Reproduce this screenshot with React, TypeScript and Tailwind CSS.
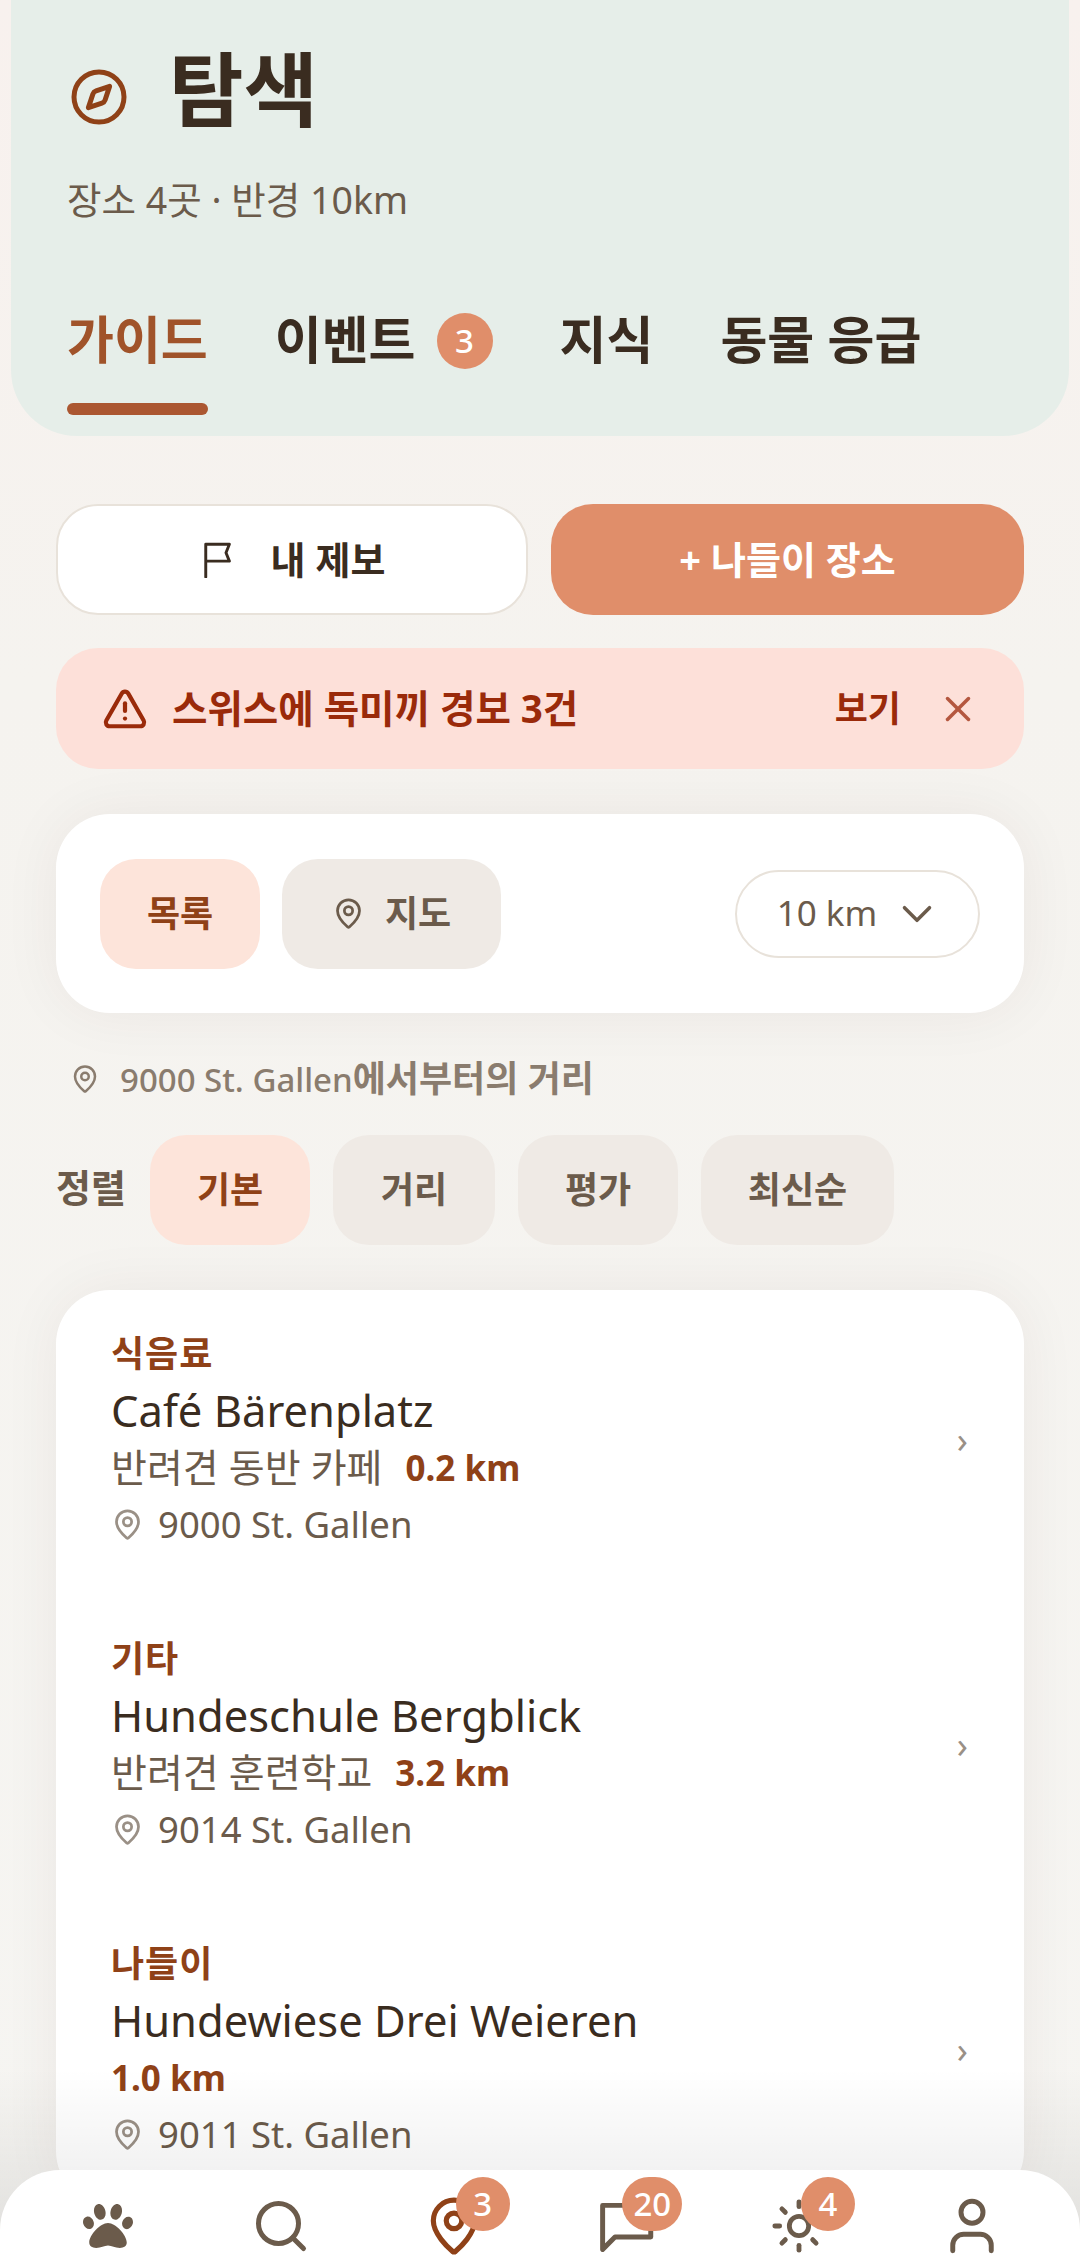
import { ChevronDown, Compass, MapPin, Search, Sun, TriangleAlert, User, X } from 'lucide-react';
import { FaPaw } from 'react-icons/fa';

const places = [
  { category: '식음료', name: 'Café Bärenplatz', desc: '반려견 동반 카페', km: '0.2 km', addr: '9000 St. Gallen' },
  { category: '기타', name: 'Hundeschule Bergblick', desc: '반려견 훈련학교', km: '3.2 km', addr: '9014 St. Gallen' },
  { category: '나들이', name: 'Hundewiese Drei Weieren', desc: '', km: '1.0 km', addr: '9011 St. Gallen' },
];

function Badge({ value, wide }: { value: string; wide?: boolean }) {
  return (
    <span
      className={`absolute top-[-16px] flex h-[54px] items-center justify-center rounded-full bg-[#e08e6a] text-[33px] font-medium text-white ${
        wide ? 'left-[29px] w-[60px]' : 'left-[35px] w-[54px]'
      }`}
    >
      {value}
    </span>
  );
}

function NavItem({ children, badge, wide }: { children: React.ReactNode; badge?: string; wide?: boolean }) {
  return (
    <div className="flex flex-1 justify-center">
      <div className="relative flex h-[66px] w-[66px] items-center justify-center">
        {children}
        {badge && <Badge value={badge} wide={wide} />}
      </div>
    </div>
  );
}

function PlaceRow({ place }: { place: (typeof places)[number] }) {
  return (
    <div className="flex h-[305px] items-start pl-[55px] pr-[56px] pt-[44px]">
      <div className="flex-1">
        <div className="text-[36px] leading-[40px] font-bold tracking-[1px] text-[#8f4117]">{place.category}</div>
        <div className="mt-[9px] text-[43.5px] leading-[54px] text-[#3a2c20]">{place.name}</div>
        <div className="mt-[3px] flex h-[54px] items-center">
          {place.desc && <span className="mr-[23px] text-[39px] text-[#6b5b4b]">{place.desc}</span>}
          <span className="mt-[3px] text-[35px] font-bold text-[#8f4117]">{place.km}</span>
        </div>
        <div className="mt-[6px] flex h-[48px] items-center gap-[14px] text-[36.5px] text-[#6b5b4b]">
          <MapPin className="h-[33px] w-[33px] text-[#9a9086]" strokeWidth={2} />
          {place.addr}
        </div>
      </div>
      <div className="mt-[79px] text-[36px] text-[#9a9086]">›</div>
    </div>
  );
}

export default function App() {
  return (
    <div
      className="relative h-[2268px] overflow-hidden bg-gradient-to-b from-[#f8f1ee] via-[#f5f3ef] via-30% to-[#f6f5f2] text-[#3a2c20]"
      style={{ fontFamily: '"Noto Sans", "Noto Sans CJK KR", sans-serif' }}
    >
      <header className="mx-[11px] h-[436px] rounded-b-[66px] bg-[#e6eee9] pl-[56px] pr-[40px] pt-[39px]">
        <div className="flex items-center gap-[40px]">
          <Compass className="ml-[2px] mt-[16px] h-[60px] w-[60px] text-[#8f4117]" strokeWidth={2} />
          <h1 className="text-[81px] leading-[100px] font-bold">탐색</h1>
        </div>
        <p className="mt-[36px] text-[37.5px] leading-[50px] text-[#6b5b4b]">장소 4곳 · 반경 10km</p>
        <nav className="mt-[79px] flex items-start gap-[67px]">
          <div className="relative text-[51px] leading-[70px] font-bold text-[#a0532a]">
            가이드
            <div className="absolute inset-x-0 top-[99px] h-[12px] rounded-full bg-[#ab5731]" />
          </div>
          <div className="flex items-center gap-[21px] text-[51px] leading-[70px] font-bold">
            이벤트
            <span className="mt-[4px] flex h-[56px] w-[56px] items-center justify-center rounded-full bg-[#e08e6a] text-[33px] font-medium text-white">
              3
            </span>
          </div>
          <div className="text-[51px] leading-[70px] font-bold">지식</div>
          <div className="text-[51px] leading-[70px] font-bold">동물 응급</div>
        </nav>
      </header>

      <main className="px-[56px] pt-[68px]">
        <div className="flex gap-[23px]">
          <button className="flex h-[111px] w-[472px] items-center justify-center gap-[36px] rounded-[42px] border-2 border-[#e8e2da] bg-white text-[38px] font-bold">
            <svg viewBox="0 0 32 32" className="h-[36px] w-[36px]" fill="none" stroke="currentColor" strokeWidth="2.6" strokeLinecap="round" strokeLinejoin="round">
              <path d="M6 31V2h21l-3 7.5 3 7.5H6" />
            </svg>
            내 제보
          </button>
          <button className="h-[111px] flex-1 rounded-[42px] bg-[#e08e6a] text-[38px] font-bold text-white">
            + 나들이 장소
          </button>
        </div>

        <div className="mt-[33px] flex h-[121px] items-center rounded-[42px] bg-[#fde0d9] pl-[46px] pr-[45px] text-[#9a2a0a]">
          <TriangleAlert className="h-[46px] w-[46px]" strokeWidth={2.2} />
          <span className="ml-[24px] flex-1 text-[38.5px] font-bold">스위스에 독미끼 경보 3건</span>
          <span className="text-[36px] font-bold">보기</span>
          <X className="ml-[36px] h-[42px] w-[42px] text-[#b4573f]" strokeWidth={2} />
        </div>

        <section className="mt-[45px] flex h-[199px] items-center rounded-[54px] bg-white pl-[44px] pr-[44px] shadow-[0_0_60px_rgba(60,40,20,0.06)]">
          <div className="flex h-[110px] w-[160px] items-center justify-center rounded-[36px] bg-[#fde4da] text-[36px] font-bold text-[#8f4117]">
            목록
          </div>
          <div className="ml-[22px] flex h-[110px] w-[219px] items-center justify-center gap-[20px] rounded-[36px] bg-[#efeae5] text-[36px] font-bold text-[#6b5b4b]">
            <MapPin className="h-[33px] w-[33px]" strokeWidth={2} />
            지도
          </div>
          <div className="ml-auto flex h-[88px] w-[245px] items-center justify-center gap-[15px] rounded-full border-2 border-[#e8e2da] pl-[4px] text-[35px] text-[#6b5b4b]">
            10 km
            <ChevronDown className="h-[50px] w-[50px]" strokeWidth={1.7} />
          </div>
        </section>

        <div className="mt-[42px] flex h-[48px] items-center gap-[20px] pl-[14px] text-[36px] font-semibold text-[#8a7c6e]">
          <MapPin className="h-[30px] w-[30px]" strokeWidth={2} />
          <span>
            <span className="text-[33px] font-medium">9000 St. Gallen</span>에서부터의 거리
          </span>
        </div>

        <div className="mt-[32px] flex items-center text-[36px] font-bold text-[#6b5b4b]">
          <span className="mb-[6px] w-[94px] text-[38px]">정렬</span>
          <div className="flex h-[110px] w-[160px] items-center justify-center rounded-[36px] bg-[#fde4da] text-[#8f4117]">기본</div>
          <div className="ml-[23px] flex h-[110px] w-[162px] items-center justify-center rounded-[36px] bg-[#efeae5]">거리</div>
          <div className="ml-[23px] flex h-[110px] w-[160px] items-center justify-center rounded-[36px] bg-[#efeae5]">평가</div>
          <div className="ml-[23px] flex h-[110px] w-[193px] items-center justify-center rounded-[36px] bg-[#efeae5]">최신순</div>
        </div>

        <section className="mt-[45px] rounded-[54px] bg-white shadow-[0_0_60px_rgba(60,40,20,0.06)]">
          {places.map(p => (
            <PlaceRow key={p.name} place={p} />
          ))}
        </section>
      </main>

      <div className="absolute inset-x-0 bottom-0 h-[200px] bg-gradient-to-b from-black/0 to-black/10" />
      <nav className="absolute inset-x-0 bottom-0 flex h-[98px] rounded-t-[60px] bg-white px-[22px] pt-[23px] text-[#6b5b4b]">
        <NavItem>
          <FaPaw className="h-[50px] w-[50px]" />
        </NavItem>
        <NavItem>
          <Search className="h-[60px] w-[60px]" strokeWidth={2} />
        </NavItem>
        <NavItem badge="3">
          <MapPin className="h-[62px] w-[62px] text-[#8f4117]" strokeWidth={2} />
        </NavItem>
        <NavItem badge="20" wide>
          <svg viewBox="0 0 24 24" className="h-[66px] w-[66px]" fill="none" stroke="currentColor" strokeWidth="1.8" strokeLinecap="round" strokeLinejoin="round">
            <path d="M3.5 20.5V4.5H21V16H8Z" />
          </svg>
        </NavItem>
        <NavItem badge="4">
          <Sun className="h-[58px] w-[58px]" strokeWidth={2} />
        </NavItem>
        <NavItem>
          <User className="h-[66px] w-[66px]" strokeWidth={1.8} />
        </NavItem>
      </nav>
    </div>
  );
}
